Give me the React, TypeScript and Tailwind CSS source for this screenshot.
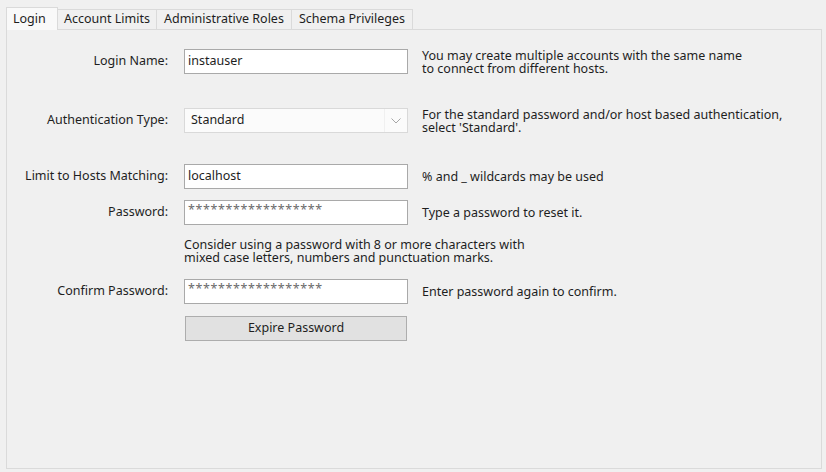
import React from "react";

const font = { fontFamily: '"Noto Sans", "Open Sans", sans-serif' };

function Row({ label, children, hint, className = "" }: { label: string; children: React.ReactNode; hint?: React.ReactNode; className?: string }) {
  return (
    <div className={`flex h-[25px] items-center ${className}`}>
      <div className="w-[161px] shrink-0 text-right text-[12.5px] text-[#1e1e1e]">{label}</div>
      <div className="ml-[16px] w-[224px] shrink-0">{children}</div>
      {hint !== undefined && <div className="ml-[14px] whitespace-nowrap text-[12.5px] leading-[13px] text-[#1e1e1e]">{hint}</div>}
    </div>
  );
}

function TextBox({ value, dim }: { value: string; dim?: boolean }) {
  return (
    <div className="flex h-[25px] items-center border border-[#a9a9a9] bg-white pl-[3px] text-[12.5px]">
      <span className={dim ? "-mt-[4px] text-[#6a6a6a] tracking-[0.6px]" : "text-[#1e1e1e]"}>{value}</span>
    </div>
  );
}

export default function App() {
  return (
    <div className="h-[472px] w-[826px] overflow-hidden bg-[#f0f0f0]" style={font}>
      <div className="flex h-[29px] items-end pl-[6px] text-[12.5px] text-[#1e1e1e]">
        <div className="relative z-10 -mb-px flex h-[23px] w-[52px] items-start border border-b-0 border-[#dadada] bg-[#f9f9f9] pl-[6px] pt-[2px]">Login</div>
        <div className="flex h-[20px] items-center border border-b-0 border-l-0 border-[#dadada] bg-[#f0f0f0] px-[6px]">Account Limits</div>
        <div className="flex h-[20px] items-center border border-b-0 border-l-0 border-[#dadada] bg-[#f0f0f0] px-[7px]">Administrative Roles</div>
        <div className="flex h-[20px] items-center border border-b-0 border-l-0 border-[#dadada] bg-[#f0f0f0] px-[7px]">Schema Privileges</div>
      </div>
      <div className="ml-[6px] h-[440px] w-[816px] border border-[#dadada] bg-[#f0f0f0]">
        <div className="flex flex-col pt-[19px]">
          <Row
            label="Login Name:"
            hint={<>You may create multiple accounts with the same name<br />to connect from different hosts.</>}
          >
            <TextBox value="instauser" />
          </Row>
          <Row
            className="mt-[34px]"
            label="Authentication Type:"
            hint={<>For the standard password and/or host based authentication,<br />select 'Standard'.</>}
          >
            <div className="flex h-[25px] items-center justify-between border border-[#d9d9d9] bg-[#fbfbfb] pl-[6px] pr-[6px] text-[12.5px] text-[#1e1e1e]">
              <span>Standard</span>
              <div className="flex h-full items-center border-l border-[#f0f0f0] pl-[6px]">
                <svg width="10" height="6" viewBox="0 0 10 6">
                  <path d="M0.5 0.5 L5 5 L9.5 0.5" fill="none" stroke="#a6a6a6" strokeWidth="1" />
                </svg>
              </div>
            </div>
          </Row>
          <Row className="mt-[31px]" label="Limit to Hosts Matching:" hint="% and _ wildcards may be used">
            <TextBox value="localhost" />
          </Row>
          <Row className="mt-[11px]" label="Password:" hint="Type a password to reset it.">
            <TextBox value="******************" dim />
          </Row>
          <div className="ml-[177px] mt-[13px] h-[26px] text-[12.5px] leading-[13px] text-[#1e1e1e]">
            Consider using a password with 8 or more characters with<br />mixed case letters, numbers and punctuation marks.
          </div>
          <Row className="mt-[15px]" label="Confirm Password:" hint="Enter password again to confirm.">
            <TextBox value="******************" dim />
          </Row>
          <div className="ml-[178px] mt-[12px] flex h-[25px] w-[222px] items-center justify-center border border-[#adadad] bg-[#e1e1e1] text-[12.5px] text-[#1e1e1e]">
            Expire Password
          </div>
        </div>
      </div>
    </div>
  );
}
